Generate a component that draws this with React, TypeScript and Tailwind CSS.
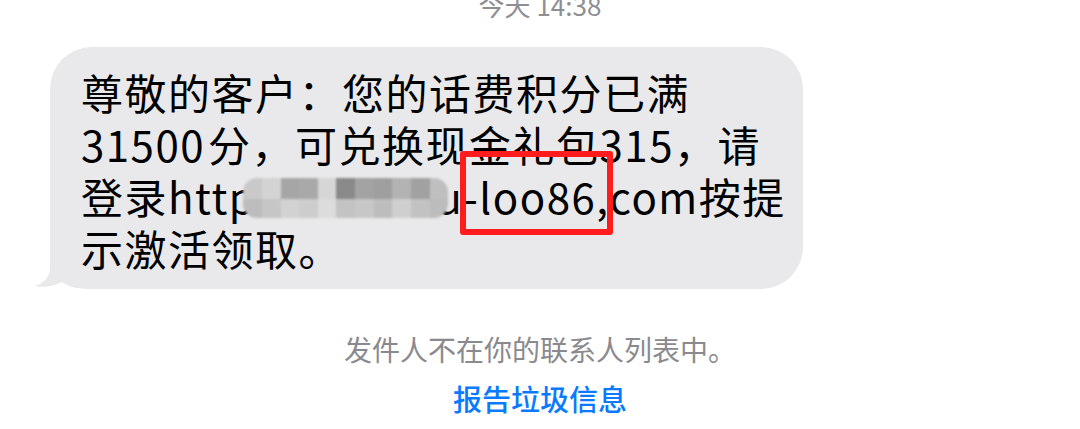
import React from 'react';

// mosaic blocks that hide part of the link
const mosaicTop = [
  'bg-[#c9c9c9]', 'bg-[#d3d3d3]', 'bg-[#a6a6a6]', 'bg-[#a9a9a9]', 'bg-[#d6d6d6]', 'bg-[#8a8a8a]',
  'bg-[#a3a3a3]', 'bg-[#9f9f9f]', 'bg-[#b3b3b3]', 'bg-[#a1a1a1]', 'bg-[#bfbfbf]',
];
const mosaicBottom = [
  'bg-[#bdbdbd]', 'bg-[#c6c6c6]', 'bg-[#d2d2d2]', 'bg-[#cdcdcd]', 'bg-[#dcdcdc]', 'bg-[#c3c3c3]',
  'bg-[#c7c7c7]', 'bg-[#bdbdbd]', 'bg-[#cfcfcf]', 'bg-[#c2c2c2]', 'bg-[#bcbcbc]',
];

const Mosaic: React.FC = () => (
  <span className="relative z-10 inline-block align-top mt-[8px] -ml-[13px] -mr-[12px] w-[205px] h-[40px] rounded-[14px] overflow-hidden blur-[1.2px]">
    <span className="flex h-[21px]">
      {mosaicTop.map((c, i) => (
        <span key={i} className={`flex-1 ${c}`} />
      ))}
    </span>
    <span className="flex h-[19px]">
      {mosaicBottom.map((c, i) => (
        <span key={i} className={`flex-1 ${c}`} />
      ))}
    </span>
  </span>
);

const BubbleTail: React.FC = () => (
  <svg className="absolute -left-[18px] bottom-0" width="60" height="50" viewBox="0 0 60 50">
    <path
      d="M18 0 L18 28 C18 38 12 44 3 47 C12 49 22 47 30 43 C37 48 45 50 60 50 L60 0 Z"
      fill="#e9e9eb"
    />
  </svg>
);

export default function App() {
  return (
    <div className="w-[1080px] h-[429px] overflow-hidden bg-white flex flex-col font-['Noto_Sans_CJK_SC',sans-serif]">
      {/* timestamp, cut off at the top */}
      <div className="-mt-[8px] h-[26px] text-center text-[26px] leading-[26px] text-[#8e8e93]">
        今天 14:38
      </div>

      {/* incoming message */}
      <div className="relative mt-[29px] ml-[50px] w-[753px] rounded-[42px] bg-[#e9e9eb] pl-[31px] pt-[19px] pb-[15px]">
        <BubbleTail />
        <div className="relative text-[42px] leading-[52px] tracking-[1.5px] text-black">
          <div className="whitespace-nowrap">尊敬的客户：您的话费积分已满</div>
          <div className="whitespace-nowrap">
            31500<span className="inline-block w-[3px]" />分，可兑换现金礼包315，请
          </div>
          <div className="whitespace-nowrap">
            登录http
            <Mosaic />
            u
            <span className="relative">
              -loo86,
              <span className="absolute -left-[3px] -right-[4px] -top-[14px] -bottom-[9px] rounded-[3px] border-[6px] border-[#ff1c1c]" />
            </span>
            com按提
          </div>
          <div className="whitespace-nowrap">示激活领取。</div>
        </div>
      </div>

      {/* sender notice */}
      <div className="mt-[46px] text-center text-[28px] leading-[28px] text-[#8a8a8e]">
        发件人不在你的联系人列表中。
      </div>
      <div className="mt-[20px] text-center text-[29px] leading-[30px] font-medium text-[#0a7aff]">
        报告垃圾信息
      </div>
    </div>
  );
}
